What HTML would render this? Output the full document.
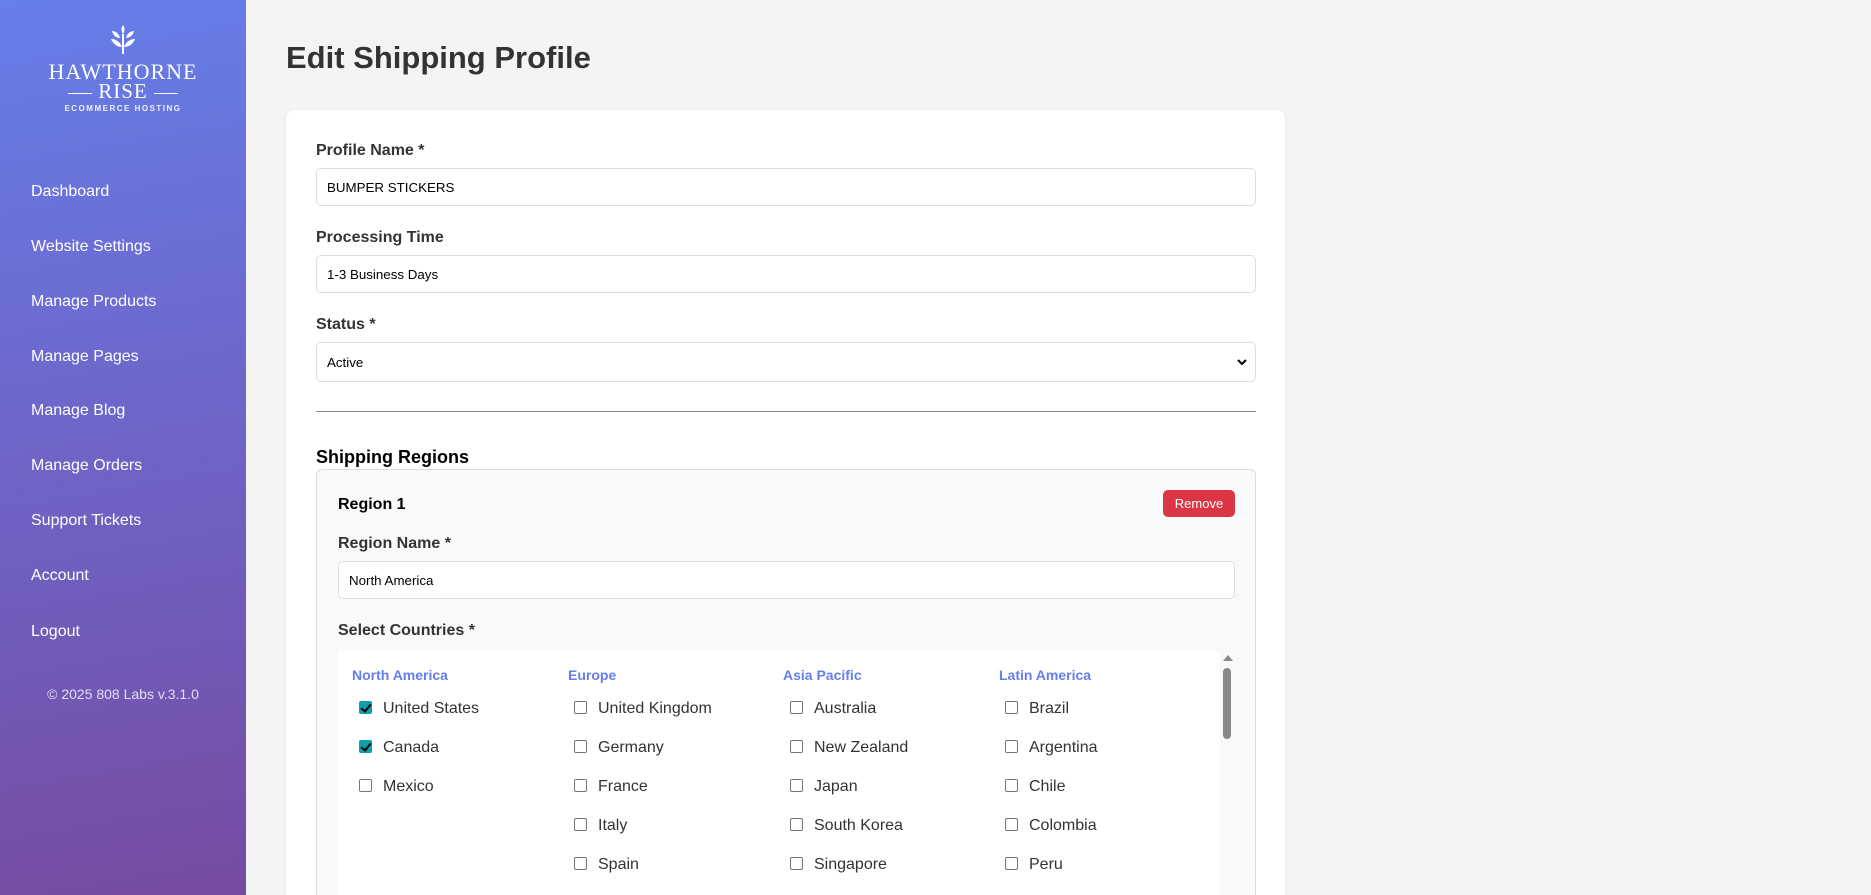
<!DOCTYPE html>
<html style="overflow:hidden;height:895px"><head><meta charset="utf-8"><style>
*{box-sizing:border-box}
body{margin:0;width:1871px;height:895px;overflow:hidden;background:#f4f4f4;font-family:"Liberation Sans",sans-serif;color:#333}
#w{position:relative;width:1871px;height:895px;overflow:hidden}
.sb{position:absolute;left:0;top:0;width:246px;height:895px;background:linear-gradient(170deg,#667eea 0%,#764ba2 100%)}
.logo{position:absolute;left:0;width:246px;text-align:center;color:#fff}
.nav a{position:absolute;left:31px;color:#fff;font-size:16px;text-decoration:none}
.foot{position:absolute;left:0;width:246px;top:686px;text-align:center;color:rgba(255,255,255,.8);font-size:14px}
h1{position:absolute;left:286px;top:40px;margin:0;font-size:31px;font-weight:bold;color:#333}
.card{position:absolute;left:286px;top:110px;width:999px;height:800px;background:#fff;border-radius:8px;box-shadow:0 2px 6px rgba(0,0,0,.06)}
.lbl{position:absolute;font-size:16px;font-weight:600;color:#333}
.inp{position:absolute;background:#fff;border:1px solid #ddd;border-radius:5px;font-size:13.33px;color:#000;padding-left:10px;display:flex;align-items:center}
.rb{position:absolute;left:316px;top:469px;width:940px;height:450px;background:#f8f9fa;border:1px solid #ddd;border-radius:6px}
.btn{position:absolute;left:1163px;top:490px;width:72px;height:27px;background:#dc3545;color:#fff;border-radius:5px;font-size:13px;display:flex;align-items:center;justify-content:center}
.cb{position:absolute;left:338px;top:650px;width:882px;height:260px;background:#fff;border-radius:4px}
.h{position:absolute;top:667px;color:#667eea;font-weight:bold;font-size:14px}
.c{position:absolute;font-size:16px;color:#333}
.c i{position:absolute;left:-24px;top:1px;width:13px;height:13px;border:1px solid #767676;border-radius:2px;background:#fff}
.c i.k{background:#0e9fae;border-color:#0e9fae}
.c i.k:after{content:"";position:absolute;left:3px;top:0px;width:4px;height:8px;border:solid #000;border-width:0 2px 2px 0;transform:rotate(40deg)}
</style></head><body><div id="w">
<div class="sb">
 <svg style="position:absolute;left:110px;top:25px" width="26" height="30" viewBox="0 0 26 30" fill="#fff"><path d="M13 0c2 3 2 6 0 9c-2-3-2-6 0-9z"/><path d="M2 6c4 0 7 3 8 7c-4 0-7-3-8-7z"/><path d="M24 6c-4 0-7 3-8 7c4 0 7-3 8-7z"/><path d="M1 14c5 0 9 3 11 8c-5 0-9-3-11-8z"/><path d="M25 14c-5 0-9 3-11 8c5 0 9-3 11-8z"/><rect x="12" y="9" width="2" height="20"/></svg>
 <div class="logo" style="top:59px;font-family:'Liberation Serif',serif;font-size:22px;letter-spacing:1px">HAWTHORNE</div>
 <div class="logo" style="top:79px;font-family:'Liberation Serif',serif;font-size:21px;letter-spacing:1px"><span style="display:inline-block;width:24px;height:1px;background:#fff;vertical-align:middle;margin-right:6px"></span>RISE<span style="display:inline-block;width:24px;height:1px;background:#fff;vertical-align:middle;margin-left:6px"></span></div>
 <div class="logo" style="top:104px;font-size:8px;letter-spacing:1.5px;font-weight:bold;opacity:.9">ECOMMERCE HOSTING</div>
 <div class="nav">
  <a style="top:183px">Dashboard</a><a style="top:238px">Website Settings</a><a style="top:293px">Manage Products</a><a style="top:348px">Manage Pages</a><a style="top:402px">Manage Blog</a><a style="top:457px">Manage Orders</a><a style="top:512px">Support Tickets</a><a style="top:567px">Account</a><a style="top:623px">Logout</a>
 </div>
 <div class="foot">© 2025 808 Labs v.3.1.0</div>
</div>
<h1>Edit Shipping Profile</h1>
<div class="card"></div>
<div class="lbl" style="left:316px;top:142px">Profile Name *</div>
<div class="inp" style="left:316px;top:168px;width:940px;height:38px">BUMPER STICKERS</div>
<div class="lbl" style="left:316px;top:229px">Processing Time</div>
<div class="inp" style="left:316px;top:255px;width:940px;height:38px">1-3 Business Days</div>
<div class="lbl" style="left:316px;top:316px">Status *</div>
<div class="inp" style="left:316px;top:342px;width:940px;height:40px">Active<svg style="position:absolute;right:8px;top:15px" width="10" height="8" viewBox="0 0 10 8"><path d="M1 2l4 4 4-4" stroke="#000" stroke-width="2" fill="none"/></svg></div>
<div style="position:absolute;left:316px;top:411px;width:940px;height:1px;background:#888"></div>
<div style="position:absolute;left:316px;top:447px;font-size:18px;font-weight:bold;color:#000">Shipping Regions</div>
<div class="rb"></div>
<div style="position:absolute;left:338px;top:496px;font-size:16px;font-weight:bold;color:#000">Region 1</div>
<div class="btn">Remove</div>
<div class="lbl" style="left:338px;top:535px">Region Name *</div>
<div class="inp" style="left:338px;top:561px;width:897px;height:38px">North America</div>
<div class="lbl" style="left:338px;top:622px">Select Countries *</div>
<div class="cb"></div>
<div style="position:absolute;left:1220px;top:650px;width:15px;height:260px;background:#f8f9fa"></div>
<div style="position:absolute;left:1223px;top:655px;width:0;height:0;border-left:5px solid transparent;border-right:5px solid transparent;border-bottom:6px solid #888"></div>
<div style="position:absolute;left:1223px;top:668px;width:8px;height:71px;background:#888;border-radius:4px"></div>
<div class="h" style="left:352px">North America</div>
<div class="h" style="left:568px">Europe</div>
<div class="h" style="left:783px">Asia Pacific</div>
<div class="h" style="left:999px">Latin America</div>
<div class="c" style="left:383px;top:700px"><i class="k"></i>United States</div>
<div class="c" style="left:383px;top:739px"><i class="k"></i>Canada</div>
<div class="c" style="left:383px;top:778px"><i></i>Mexico</div>
<div class="c" style="left:598px;top:700px"><i></i>United Kingdom</div>
<div class="c" style="left:598px;top:739px"><i></i>Germany</div>
<div class="c" style="left:598px;top:778px"><i></i>France</div>
<div class="c" style="left:598px;top:817px"><i></i>Italy</div>
<div class="c" style="left:598px;top:856px"><i></i>Spain</div>
<div class="c" style="left:814px;top:700px"><i></i>Australia</div>
<div class="c" style="left:814px;top:739px"><i></i>New Zealand</div>
<div class="c" style="left:814px;top:778px"><i></i>Japan</div>
<div class="c" style="left:814px;top:817px"><i></i>South Korea</div>
<div class="c" style="left:814px;top:856px"><i></i>Singapore</div>
<div class="c" style="left:1029px;top:700px"><i></i>Brazil</div>
<div class="c" style="left:1029px;top:739px"><i></i>Argentina</div>
<div class="c" style="left:1029px;top:778px"><i></i>Chile</div>
<div class="c" style="left:1029px;top:817px"><i></i>Colombia</div>
<div class="c" style="left:1029px;top:856px"><i></i>Peru</div>
</div></body></html>
